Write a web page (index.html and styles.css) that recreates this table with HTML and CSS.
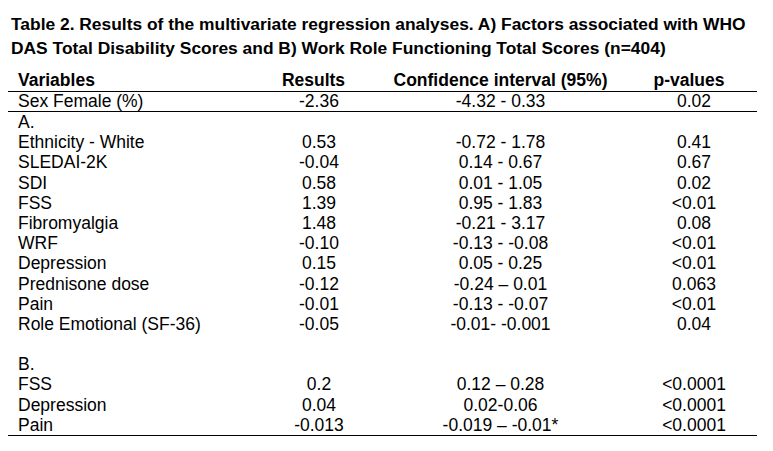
FILE: index.html
```html
<!DOCTYPE html>
<html lang="en">
<head>
<meta charset="utf-8">
<title>Table 2</title>
<link rel="stylesheet" href="styles.css">
</head>
<body>
<div class="page">
  <h1 class="title">Table 2. Results of the multivariate regression analyses. A) Factors associated with WHO<br>DAS Total Disability Scores and B) Work Role Functioning Total Scores (n=404)</h1>
  <div class="table">
    <div class="row head">
      <div class="c var">Variables</div>
      <div class="c res">Results</div>
      <div class="c ci">Confidence interval (95%)</div>
      <div class="c pv">p-values</div>
    </div>
    <div class="row sex">
      <div class="c var">Sex Female (%)</div>
      <div class="c res">-2.36</div>
      <div class="c ci">-4.32 - 0.33</div>
      <div class="c pv">0.02</div>
    </div>
    <div class="body">
      <div class="row"><div class="c var">A.</div><div class="c res"></div><div class="c ci"></div><div class="c pv"></div></div>
      <div class="row"><div class="c var">Ethnicity - White</div><div class="c res">0.53</div><div class="c ci">-0.72 - 1.78</div><div class="c pv">0.41</div></div>
      <div class="row"><div class="c var">SLEDAI-2K</div><div class="c res">-0.04</div><div class="c ci">0.14 - 0.67</div><div class="c pv">0.67</div></div>
      <div class="row"><div class="c var">SDI</div><div class="c res">0.58</div><div class="c ci">0.01 - 1.05</div><div class="c pv">0.02</div></div>
      <div class="row"><div class="c var">FSS</div><div class="c res">1.39</div><div class="c ci">0.95 - 1.83</div><div class="c pv">&lt;0.01</div></div>
      <div class="row"><div class="c var">Fibromyalgia</div><div class="c res">1.48</div><div class="c ci">-0.21 - 3.17</div><div class="c pv">0.08</div></div>
      <div class="row"><div class="c var">WRF</div><div class="c res">-0.10</div><div class="c ci">-0.13 - -0.08</div><div class="c pv">&lt;0.01</div></div>
      <div class="row"><div class="c var">Depression</div><div class="c res">0.15</div><div class="c ci">0.05 - 0.25</div><div class="c pv">&lt;0.01</div></div>
      <div class="row"><div class="c var">Prednisone dose</div><div class="c res">-0.12</div><div class="c ci">-0.24 – 0.01</div><div class="c pv">0.063</div></div>
      <div class="row"><div class="c var">Pain</div><div class="c res">-0.01</div><div class="c ci">-0.13 - -0.07</div><div class="c pv">&lt;0.01</div></div>
      <div class="row"><div class="c var">Role Emotional (SF-36)</div><div class="c res">-0.05</div><div class="c ci">-0.01- -0.001</div><div class="c pv">0.04</div></div>
      <div class="row"><div class="c var"></div><div class="c res"></div><div class="c ci"></div><div class="c pv"></div></div>
      <div class="row"><div class="c var">B.</div><div class="c res"></div><div class="c ci"></div><div class="c pv"></div></div>
      <div class="row"><div class="c var">FSS</div><div class="c res">0.2</div><div class="c ci">0.12 – 0.28</div><div class="c pv">&lt;0.0001</div></div>
      <div class="row"><div class="c var">Depression</div><div class="c res">0.04</div><div class="c ci">0.02-0.06</div><div class="c pv">&lt;0.0001</div></div>
      <div class="row"><div class="c var">Pain</div><div class="c res">-0.013</div><div class="c ci">-0.019 – -0.01*</div><div class="c pv">&lt;0.0001</div></div>
    </div>
  </div>
</div>
</body>
</html>
```

FILE: styles.css
```css
html, body {
  margin: 0;
  padding: 0;
  background: #ffffff;
}

.page {
  width: 773px;
  height: 451px;
  box-sizing: border-box;
  padding-top: 13px;
  font-family: "Liberation Sans", Arial, sans-serif;
  color: #000000;
}

.title {
  margin: 0;
  padding-left: 11px;
  font-size: 17.4px;
  line-height: 23.5px;
  font-weight: bold;
  white-space: nowrap;
}

.table {
  margin-left: 8px;
  width: 749px;
  margin-top: 10px;
  font-size: 17.5px;
}

.row {
  display: grid;
  grid-template-columns: 242px 138px 225px 144px;
  line-height: 20.2px;
  height: 20.2px;
}

.c {
  white-space: nowrap;
  text-align: center;
}

.c.var {
  text-align: left;
  padding-left: 10px;
}

.c.pv {
  padding-left: 18px;
}

.head {
  font-weight: bold;
  height: 20.5px;
  line-height: 20.5px;
  border-bottom: 1px solid #000;
}

.head .res {
  padding-right: 11px;
}

.head .pv {
  padding-left: 8px;
}

.sex {
  height: 19.5px;
  line-height: 19px;
  border-bottom: 1px solid #000;
}

.body {
  border-bottom: 1px solid #000;
}
```
